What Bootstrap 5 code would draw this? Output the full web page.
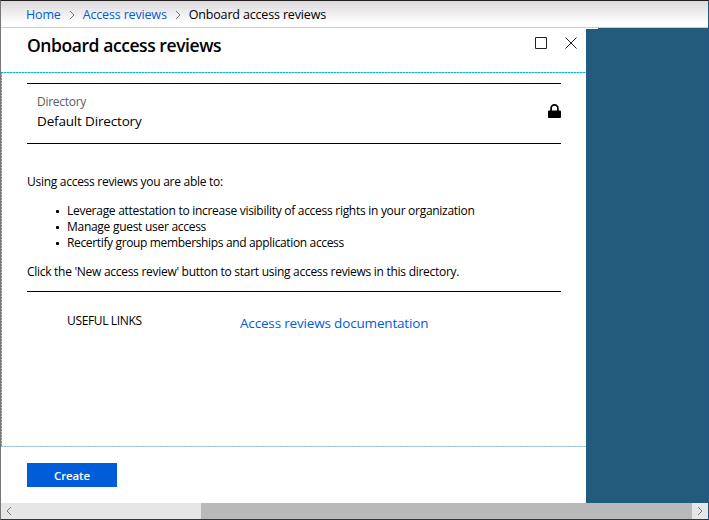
<!DOCTYPE html>
<html lang="en">
<head>
<meta charset="utf-8">
<meta name="viewport" content="width=device-width, initial-scale=1">
<title>Onboard access reviews</title>
<link href="https://cdn.jsdelivr.net/npm/bootstrap@5.3.0/dist/css/bootstrap.min.css" rel="stylesheet">
<style>
  body { font-family: "Open Sans", "Noto Sans", sans-serif; font-size: 12px; letter-spacing: -.28px; line-height: 16px; color: #000; }
  a { color: #015cda; text-decoration: none; }
  .portal { height: 520px; width: 709px; border: 1px solid; border-color: #231f20 #28577d #2b3648 #77777b; }
  .crumbs { --bs-breadcrumb-margin-bottom: 0; --bs-breadcrumb-font-size: 12.5px; letter-spacing: -.16px; height: 27px; padding: 0 0 0 25px; border-bottom: 1px solid #ccc; background: linear-gradient(#dcd9db, #e4e2e3 20%, #fff 85%); }
  .crumbs li { line-height: 28px; }
  .crumbs svg { margin: 0 7px 0 8px; display: block; margin-top: 9px; }
  .stage { background: linear-gradient(#fff, #fff) 0 0 / 597px 1px no-repeat #235b7d; height: 475px; }
  .blade { width: 585px; background: #fff; }
  .blade-head { height: 44px; padding: 0 8px 0 26px; }
  .blade-title { font-size: 17.5px; font-weight: 600; line-height: 34px; letter-spacing: -.43px; }
  .blade-main {
    height: 375px; padding: 11px 25px 0 26px;
    background:
      repeating-linear-gradient(90deg, #00b4e8 0 2px, #8adcf2 2px 3px) 0 0 / 100% 1px no-repeat,
      repeating-linear-gradient(90deg, #8fbfca 0 2px, #c6dfe5 2px 3px) 0 100% / 100% 1px no-repeat,
      repeating-linear-gradient(#25b5dc 0 2px, #a8e2f1 2px 3px) 0 0 / 1px 100% no-repeat;
  }
  .picker { height: 61px; border: solid #000; border-width: 1px 0; padding: 10px 0 0 10px; }
  .picker-label { color: #5c5c5c; }
  .value-text { font-size: 13.5px; line-height: 20px; letter-spacing: -.17px; }
  .picker .value-text { line-height: 22px; }
  .lock { margin-top: 9px; }
  .intro { margin-top: 30px; height: 118px; border-bottom: 1px solid #000; }
  .intro ul { margin: 13px 0; padding-left: 29px; list-style: none; }
  .intro li { display: flex; align-items: center; gap: 8px; }
  .intro li::before { content: ""; width: 3px; height: 3px; border-radius: 1px; background: #000; }
  .intro li:last-child { letter-spacing: -.35px; }
  .links-row { padding: 21px 0 0 40px; }
  .links-label { width: 173px; letter-spacing: -.35px; }
  .create { --bs-btn-bg: #015cda; --bs-btn-color: #fff; --bs-btn-hover-bg: #014fbc; --bs-btn-hover-color: #fff; width: 90px; height: 24px; margin: 16px 0 0 26px; padding: 0; font-size: 11.5px; font-weight: 600; line-height: 25px; letter-spacing: -.1px; }
  .scroller { height: 16px; background: #e6e6e6; }
  .scroller-end { width: 16px; }
  .thumb { width: 491px; margin-left: 184px; background: #b9b9b9; }
</style>
</head>
<body>
<div class="portal d-flex flex-column overflow-hidden">
  <nav aria-label="breadcrumb">
    <ol class="breadcrumb crumbs flex-nowrap">
      <li><a href="#">Home</a></li>
      <li><svg width="7" height="10" viewBox="0 0 7 10" fill="none" stroke="#777"><path d="M1 1 5 5 1 9"/></svg></li>
      <li><a href="#">Access reviews</a></li>
      <li><svg width="7" height="10" viewBox="0 0 7 10" fill="none" stroke="#777"><path d="M1 1 5 5 1 9"/></svg></li>
      <li aria-current="page">Onboard access reviews</li>
    </ol>
  </nav>
  <main class="stage">
    <section class="blade h-100">
      <header class="blade-head d-flex justify-content-between">
        <h1 class="blade-title mb-0">Onboard access reviews</h1>
        <svg width="44" height="14" class="mt-2" viewBox="0 0 44 14" fill="none" stroke="#222"><path d="M1.5 1.5h11v11h-11zM31.5 1.5l11 11m0-11-11 11"/></svg>
      </header>
      <div class="blade-main">
        <div class="picker d-flex justify-content-between">
          <div>
            <div class="picker-label">Directory</div>
            <div class="value-text">Default Directory</div>
          </div>
          <svg class="lock" width="13" height="16" viewBox="0 0 13 16"><path d="M3.1 8V5.3a3.4 3.4 0 0 1 6.8 0V8" fill="none" stroke="#000" stroke-width="1.7"/><rect y="7.5" width="13" height="7.5" rx="1"/></svg>
        </div>
        <div class="intro">
          <p class="mb-0">Using access reviews you are able to:</p>
          <ul>
            <li>Leverage attestation to increase visibility of access rights in your organization</li>
            <li>Manage guest user access</li>
            <li>Recertify group memberships and application access</li>
          </ul>
          <p class="mb-0">Click the 'New access review' button to start using access reviews in this directory.</p>
        </div>
        <div class="links-row d-flex">
          <div class="links-label">USEFUL LINKS</div>
          <a href="#" class="value-text">Access reviews documentation</a>
        </div>
      </div>
      <button type="button" class="btn create rounded-0 border-0 d-block">Create</button>
    </section>
  </main>
  <div class="scroller d-flex">
    <svg class="scroller-end" height="16" viewBox="0 0 16 16" fill="none" stroke="#777"><path d="M10 4 6 8l4 4"/></svg>
    <div class="thumb"></div>
    <svg class="scroller-end" height="16" viewBox="0 0 16 16" fill="none" stroke="#777"><path d="m6 4 4 4-4 4"/></svg>
  </div>
</div>
<script src="https://cdn.jsdelivr.net/npm/bootstrap@5.3.0/dist/js/bootstrap.bundle.min.js"></script>
</body>
</html>
